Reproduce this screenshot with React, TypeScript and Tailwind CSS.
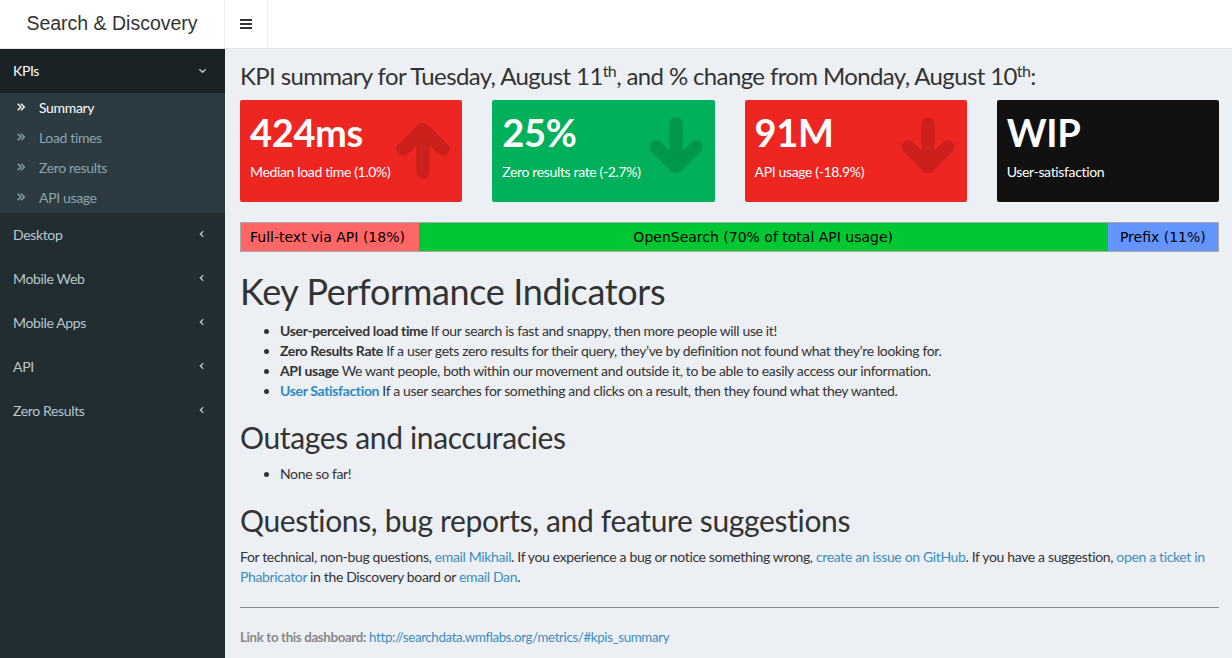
import React from "react";

const sans = "font-['Lato','Open_Sans',sans-serif] tracking-[-0.022em]";

function Arrow({ dir }: { dir: "up" | "down" }) {
  return (
    <svg
      viewBox="0 0 24 24"
      className={`absolute right-[7px] top-[16px] h-[64px] w-[64px] ${dir === "down" ? "rotate-180" : ""}`}
      fill="none"
      stroke="rgba(0,0,0,0.14)"
      strokeWidth="5"
      strokeLinecap="round"
      strokeLinejoin="round"
    >
      <path d="M12 21V5M4.5 12.5L12 5l7.5 7.5" />
    </svg>
  );
}

function DoubleAngle() {
  return (
    <svg viewBox="0 0 12 12" className="h-[10px] w-[10px]" fill="none" stroke="currentColor" strokeWidth="1.6">
      <path d="M2 2l4 4-4 4M6 2l4 4-4 4" />
    </svg>
  );
}

function AngleLeft() {
  return (
    <svg viewBox="0 0 10 10" className="h-[8px] w-[8px]" fill="none" stroke="currentColor" strokeWidth="1.6">
      <path d="M6.5 1.5L3 5l3.5 3.5" />
    </svg>
  );
}

function AngleDown() {
  return (
    <svg viewBox="0 0 10 10" className="h-[9px] w-[9px]" fill="none" stroke="currentColor" strokeWidth="1.6">
      <path d="M1.5 3.5L5 7l3.5-3.5" />
    </svg>
  );
}

const boxes = [
  { value: "424ms", label: "Median load time (1.0%)", bg: "bg-[#ee2622]", arrow: "up" as const },
  { value: "25%", label: "Zero results rate (-2.7%)", bg: "bg-[#00b05a]", arrow: "down" as const },
  { value: "91M", label: "API usage (-18.9%)", bg: "bg-[#ee2622]", arrow: "down" as const },
  { value: "WIP", label: "User-satisfaction", bg: "bg-[#111111]", arrow: null },
];

const subItems = ["Summary", "Load times", "Zero results", "API usage"];
const menus = ["Desktop", "Mobile Web", "Mobile Apps", "API", "Zero Results"];

export default function App() {
  return (
    <div className={`flex h-[658px] w-[1232px] flex-col overflow-hidden bg-[#ecf0f5] ${sans}`}>
      <header className="flex h-[49px] shrink-0 border-b border-[#e6e6e6] bg-white tracking-normal">
        <div className="flex w-[225px] items-center justify-center border-r border-[#eeeeee] pb-[1px] font-['Liberation_Sans',sans-serif] text-[19.5px] font-light text-[#333]">
          Search &amp; Discovery
        </div>
        <div className="flex w-[43px] flex-col items-center justify-center gap-[2px] border-r border-[#eeeeee]">
          <span className="h-[2px] w-[12px] bg-[#333]" />
          <span className="h-[2px] w-[12px] bg-[#333]" />
          <span className="h-[2px] w-[12px] bg-[#333]" />
        </div>
      </header>
      <div className="flex flex-1">
        <aside className="w-[225px] shrink-0 bg-[#222d32] text-[14px]">
          <div className="flex h-[44px] items-center justify-between bg-[#1a2226] pb-[2px] pl-[13px] pr-[18px] text-white">
            <span>KPIs</span>
            <span className="text-[#b8c7ce]"><AngleDown /></span>
          </div>
          <ul className="bg-[#2c3b41]">
            {subItems.map((s, i) => (
              <li
                key={s}
                className={`flex h-[30px] items-center gap-[13px] pb-[2px] pl-[16px] text-[14px] ${i === 0 ? "text-white" : "text-[#8aa4af]"}`}
              >
                <DoubleAngle />
                <span>{s}</span>
              </li>
            ))}
          </ul>
          {menus.map((m) => (
            <div key={m} className="flex h-[44px] items-center justify-between pb-[2px] pl-[13px] pr-[19px] text-[#b8c7ce]">
              <span>{m}</span>
              <AngleLeft />
            </div>
          ))}
        </aside>
        <main className="flex-1 pl-[15px] pr-[13px] pt-[11px] text-[14px] text-[#333]">
          <h3 className="text-[24px] leading-[32px] tracking-[-0.026em]">
            KPI summary for Tuesday, August 11<sup className="text-[16px]">th</sup>, and % change from Monday, August 10
            <sup className="text-[16px]">th</sup>:
          </h3>
          <div className="mt-[8px] grid grid-cols-4 gap-[30px]">
            {boxes.map((b) => (
              <div key={b.value} className={`relative h-[102px] rounded-[2px] ${b.bg} px-[10px] pt-[10px] text-white`}>
                <div className="text-[38px] font-bold leading-[44px]">{b.value}</div>
                <div className="mt-[7px] text-[14px]">{b.label}</div>
                {b.arrow && <Arrow dir={b.arrow} />}
              </div>
            ))}
          </div>
          <div className="mt-[20px] flex h-[30px] border border-[#aaaaaa] font-['DejaVu_Sans',sans-serif] text-[14px] tracking-normal text-black">
            <div className="flex w-[18.2%] items-center pl-[9px] bg-[#ff6666]">Full-text via API (18%)</div>
            <div className="flex flex-1 items-center justify-center bg-[#00c832]">OpenSearch (70% of total API usage)</div>
            <div className="flex w-[11.3%] items-center justify-center bg-[#6495ff]">Prefix (11%)</div>
          </div>
          <h1 className="mt-[19px] text-[36px] leading-[40px]">Key Performance Indicators</h1>
          <ul className="mt-[10px] list-disc pl-[40px] leading-[20px]">
            <li>
              <b>User-perceived load time</b> If our search is fast and snappy, then more people will use it!
            </li>
            <li>
              <b>Zero Results Rate</b> If a user gets zero results for their query, they’ve by definition not found what they’re looking for.
            </li>
            <li>
              <b>API usage</b> We want people, both within our movement and outside it, to be able to easily access our information.
            </li>
            <li>
              <b className="text-[#2a8ac3]">User Satisfaction</b> If a user searches for something and clicks on a result, then they found what they wanted.
            </li>
          </ul>
          <h2 className="mt-[20px] text-[30px] leading-[33px]">Outages and inaccuracies</h2>
          <ul className="mt-[10px] list-disc pl-[40px] leading-[20px]">
            <li>None so far!</li>
          </ul>
          <h2 className="mt-[20px] text-[30px] leading-[33px]">Questions, bug reports, and feature suggestions</h2>
          <p className="mt-[10px] leading-[20px]">
            For technical, non-bug questions, <a className="text-[#3c8dbc]">email Mikhail</a>. If you experience a bug or notice something wrong,{" "}
            <a className="text-[#3c8dbc]">create an issue on GitHub</a>. If you have a suggestion,{" "}
            <a className="text-[#3c8dbc]">open a ticket in Phabricator</a> in the Discovery board or{" "}
            <a className="text-[#3c8dbc]">email Dan</a>.
          </p>
          <hr className="mt-[20px] border-t border-[#888]" />
          <p className="mt-[20px] text-[13.3px] text-[#888]">
            <b>Link to this dashboard:</b> <a className="text-[#3c8dbc]">http://searchdata.wmflabs.org/metrics/#kpis_summary</a>
          </p>
        </main>
      </div>
    </div>
  );
}
